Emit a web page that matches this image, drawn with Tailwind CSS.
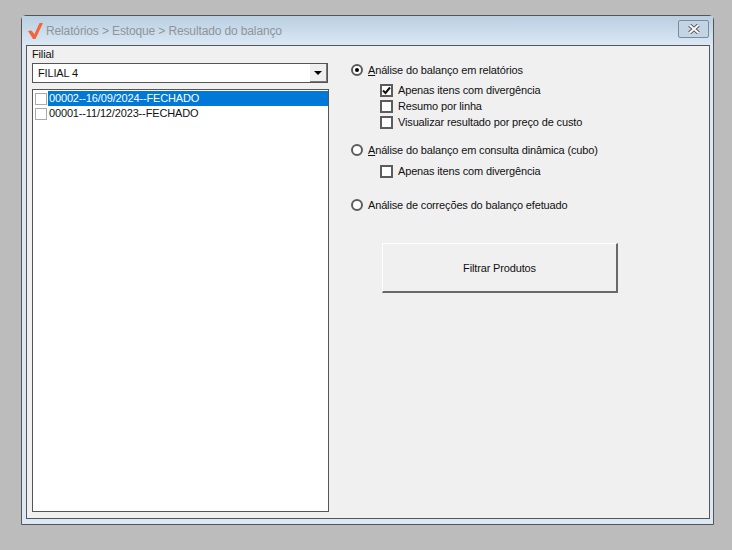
<!DOCTYPE html>
<html lang="en">
<head>
    <meta charset="UTF-8">
    <title>Resultado do balanço</title>
    <script src="https://cdn.jsdelivr.net/npm/@tailwindcss/browser@4"></script>
</head>
<body class="bg-[#bcbcbc] h-[550px] overflow-hidden font-['Liberation_Sans',sans-serif] text-[11px] tracking-[-0.15px] text-[#111]">
    <div class="ml-[21px] mt-[15px] w-[693px] h-[510px] border border-[#555] rounded-t-[5px] bg-[#dbe8f5] pl-[4px] pr-[3px] pb-[5px] flex flex-col">
        <!-- title bar -->
        <div class="h-[29px] -ml-[4px] -mr-[3px] pl-[4px] pr-[3px] shrink-0 flex items-center bg-gradient-to-b from-[#b9cfe1] to-[#dbe8f5]">
            <svg width="15" height="16" viewBox="0 0 15 16" class="ml-[2px]">
                <path d="M0 8 L3.5 7.5 L6.5 11 L11.5 0 L15 0 L7.5 16 L5 16 Z" fill="#f4653a"/>
            </svg>
            <span class="ml-[3px] text-[12px] tracking-[-0.13px] text-[#8f9499]">Relatórios &gt; Estoque &gt; Resultado do balanço</span>
            <div class="ml-auto mr-[1px] mb-[3px] w-[31px] h-[18px] border border-[#7a8ba0] rounded-[2px] bg-[#c3d4e5] flex items-center justify-center">
                <svg width="12" height="10" viewBox="0 0 12 10">
                    <path d="M1.5 1 L10.5 9 M10.5 1 L1.5 9" stroke="#555" stroke-width="3.8"/>
                    <path d="M1.5 1 L10.5 9 M10.5 1 L1.5 9" stroke="#fafafa" stroke-width="2"/>
                </svg>
            </div>
        </div>

        <!-- panel -->
        <div class="flex-1 border border-[#555] bg-[#f0f0f0] flex">
            <div class="w-[303px] pl-[5px] shrink-0">
                <div class="h-[17px] pt-[1px] leading-[14px]">Filial</div>
                <div class="w-[296px] h-[20px] border border-[#555] bg-white flex items-center pl-[5px]">
                    <span class="pt-[1px]">FILIAL 4</span>
                    <div class="ml-auto w-[17px] h-[18px] bg-[#efefef] border-r border-b border-[#777] flex items-center justify-center">
                        <div class="w-0 h-0 border-x-[4px] border-x-transparent border-t-[4px] border-t-black"></div>
                    </div>
                </div>
                <div class="mt-[6px] w-[297px] h-[423px] border border-[#555] bg-white pt-[1px]">
                    <div class="flex items-center h-[15px] pl-[2px]">
                        <div class="w-[12px] h-[12px] border border-[#aaa] bg-white shrink-0"></div>
                        <div class="ml-[1px] pl-[1px] flex-1 h-[15px] bg-[#0078d7] text-white leading-[15px]">00002--16/09/2024--FECHADO</div>
                    </div>
                    <div class="flex items-center h-[15px] pl-[2px]">
                        <div class="w-[12px] h-[12px] border border-[#aaa] bg-white shrink-0"></div>
                        <div class="ml-[1px] pl-[1px] flex-1 leading-[15px]">00001--11/12/2023--FECHADO</div>
                    </div>
                </div>
            </div>

            <!-- options -->
            <div class="pl-[21px] pt-[18px] flex flex-col">
                <div class="flex items-center h-[12px]">
                    <div class="w-[12px] h-[12px] rounded-full border-2 border-[#5c5c5c] bg-white flex items-center justify-center">
                        <div class="w-[4px] h-[4px] rounded-full bg-black"></div>
                    </div>
                    <span class="ml-[5px] pt-[1px]"><u>A</u>nálise do balanço em relatórios</span>
                </div>
                <div class="pl-[29px] mt-[8px] flex flex-col gap-[3px]">
                    <div class="flex items-center h-[13px]">
                        <div class="w-[13px] h-[13px] border-2 border-[#5c5c5c] bg-white flex items-center justify-center">
                            <svg width="9" height="9" viewBox="0 0 9 9"><path d="M1 4.5 L3.5 7 L8 1.5" fill="none" stroke="#111" stroke-width="2"/></svg>
                        </div>
                        <span class="ml-[5px]">Apenas itens com divergência</span>
                    </div>
                    <div class="flex items-center h-[13px]">
                        <div class="w-[13px] h-[13px] border-2 border-[#5c5c5c] bg-white"></div>
                        <span class="ml-[5px]">Resumo por linha</span>
                    </div>
                    <div class="flex items-center h-[13px]">
                        <div class="w-[13px] h-[13px] border-2 border-[#5c5c5c] bg-white"></div>
                        <span class="ml-[5px]">Visualizar resultado por preço de custo</span>
                    </div>
                </div>
                <div class="flex items-center h-[12px] mt-[15px]">
                    <div class="w-[12px] h-[12px] rounded-full border-2 border-[#5c5c5c] bg-white"></div>
                    <span class="ml-[5px]"><u>A</u>nálise do balanço em consulta dinâmica (cubo)</span>
                </div>
                <div class="pl-[29px] mt-[9px]">
                    <div class="flex items-center h-[13px]">
                        <div class="w-[13px] h-[13px] border-2 border-[#5c5c5c] bg-white"></div>
                        <span class="ml-[5px]">Apenas itens com divergência</span>
                    </div>
                </div>
                <div class="flex items-center h-[12px] mt-[21px]">
                    <div class="w-[12px] h-[12px] rounded-full border-2 border-[#5c5c5c] bg-white"></div>
                    <span class="ml-[5px] pt-[1px]">Análise de correções do balanço efetuado</span>
                </div>
                <div class="ml-[31px] mt-[32px] pt-[1px] w-[236px] h-[50px] bg-[#f0f0f0] border-t border-l border-white border-r-2 border-b-2 border-r-[#696969] border-b-[#696969] flex items-center justify-center">
                    Filtrar Produtos
                </div>
            </div>
        </div>
    </div>
</body>
</html>
